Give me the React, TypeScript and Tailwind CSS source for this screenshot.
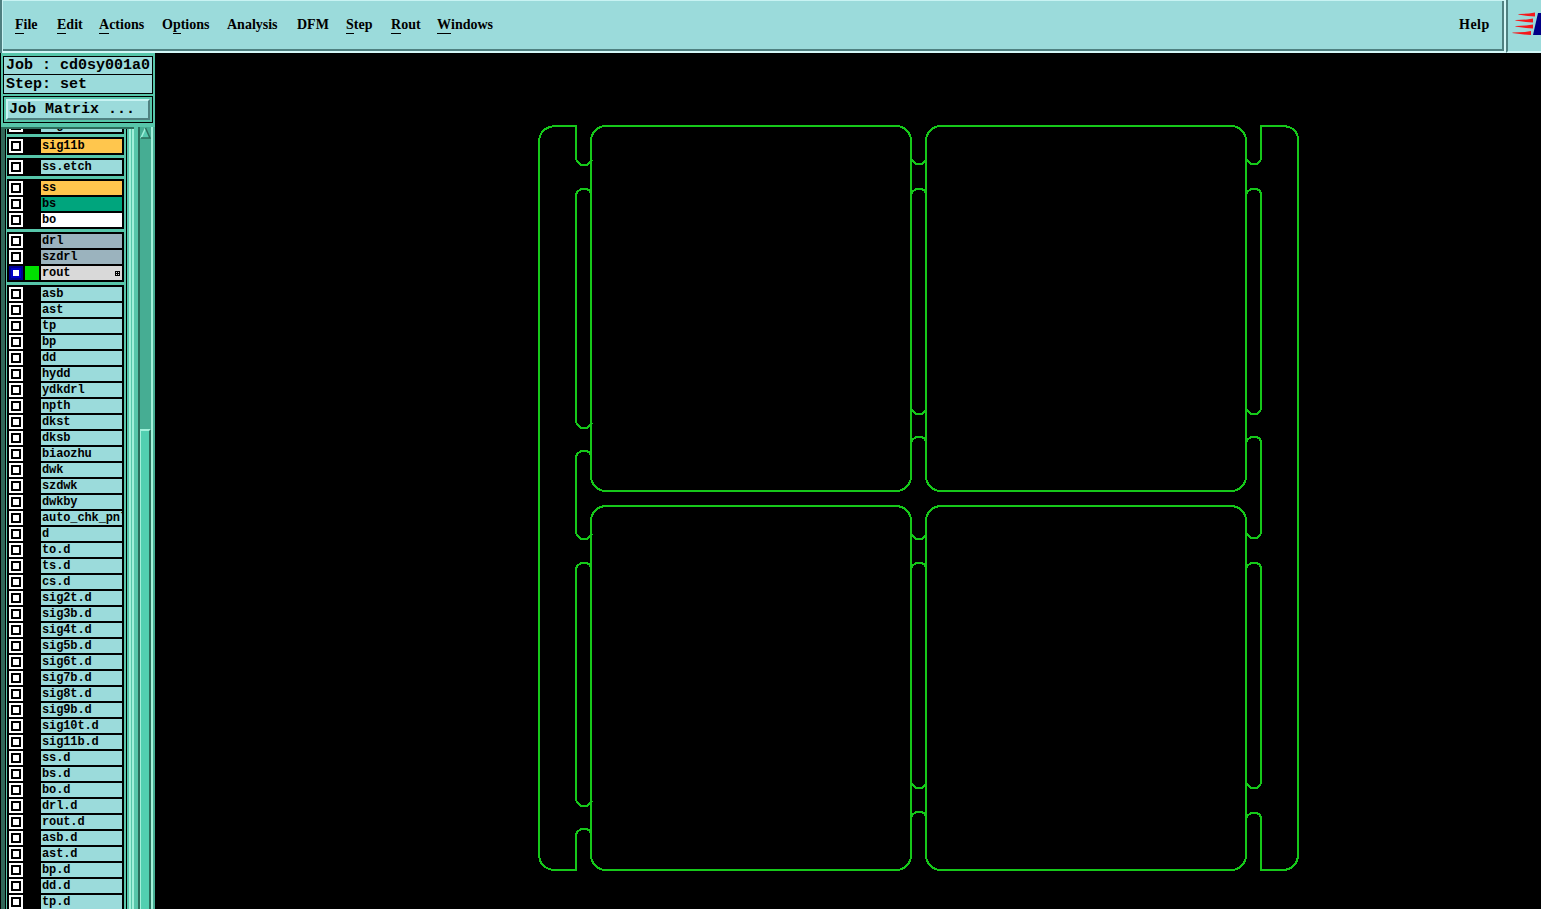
import clsx from "clsx";

type MenuItem = { label: string; hot?: number; width: string };
type Layer = { name: string; color?: string; active?: boolean };

const menuItems: MenuItem[] = [
  { label: "File", hot: 0, width: "w-[42px]" },
  { label: "Edit", hot: 0, width: "w-[42px]" },
  { label: "Actions", hot: 0, width: "w-[63px]" },
  { label: "Options", hot: 1, width: "w-[65px]" },
  { label: "Analysis", width: "w-[70px]" },
  { label: "DFM", width: "w-[49px]" },
  { label: "Step", hot: 0, width: "w-[45px]" },
  { label: "Rout", hot: 0, width: "w-[46px]" },
  { label: "Windows", hot: 0, width: "w-[60px]" },
];

const names = (list: string): Layer[] => list.split(" ").map((name) => ({ name }));

const layerGroups: Layer[][] = [
  [{ name: "sig10t" }],
  [{ name: "sig11b", color: "bg-[#ffc64d]" }],
  [{ name: "ss.etch" }],
  [
    { name: "ss", color: "bg-[#ffc64d]" },
    { name: "bs", color: "bg-[#00a57d]" },
    { name: "bo", color: "bg-white" },
  ],
  [
    { name: "drl", color: "bg-[#9bb3be]" },
    { name: "szdrl", color: "bg-[#9bb3be]" },
    { name: "rout", color: "bg-[#d9d9d9]", active: true },
  ],
  names(
    "asb ast tp bp dd hydd ydkdrl npth dkst dksb biaozhu dwk szdwk dwkby auto_chk_pnl d to.d ts.d cs.d sig2t.d sig3b.d sig4t.d sig5b.d sig6t.d sig7b.d sig8t.d sig9b.d sig10t.d sig11b.d ss.d bs.d bo.d drl.d rout.d asb.d ast.d bp.d dd.d tp.d"
  ),
];

const MenuLabel = ({ label, hot }: { label: string; hot?: number }) => {
  if (hot === undefined) return <>{label}</>;
  return (
    <>
      {label.slice(0, hot)}
      <span className="inline-block h-[17px] border-b border-black">{label[hot]}</span>
      {label.slice(hot + 1)}
    </>
  );
};

const MenuBar = () => (
  <header className="flex h-[53px] shrink-0 bg-[#9bdbdb] font-['Liberation_Serif',serif] text-[14px] leading-[16px] font-bold">
    <div className="w-[3px] border-r border-[#c8f3f3] bg-[#4f7f80]" />
    <div className="flex flex-1 border-t border-b-2 border-t-[#c8f3f3] border-b-[#d2f7f7]">
      <div className="flex flex-1 items-start border-r-2 border-b-2 border-[#4f8181] pt-[16px] pl-3">
        {menuItems.map((item) => (
          <div key={item.label} className={clsx("shrink-0 whitespace-nowrap", item.width)}>
            <MenuLabel label={item.label} hot={item.hot} />
          </div>
        ))}
        <div className="ml-auto w-[43px] tracking-[0.5px]">Help</div>
      </div>
    </div>
    <div className="w-[2px] bg-[#d2f7f7]" />
    <div className="w-[35px] overflow-hidden border-b-2 border-l-2 border-b-[#d2f7f7] border-l-[#4f8181]">
      <svg width="35" height="51" viewBox="1508 0 35 51">
        <g fill="#f5181b">
          <path d="M1519 14 1529 13.500 1535 12.500v4l-7-.5-10-1.500z" />
          <path d="M1516 20 1527 19.500 1533 18.500v4l-7-.5-11-1.500z" />
          <path d="M1516 26 1526 25.500 1533 24.500v4l-7-.5-11-1.500z" />
          <path d="M1513 32.500 1525 32 1531 31v4l-7-.5-12-1.500z" />
        </g>
        <path d="M1538 13h5v22h-10z" fill="#000085" />
      </svg>
    </div>
  </header>
);

const LayerRow = ({ name, color = "bg-[#9bdbdb]", active }: Layer) => (
  <div className="flex h-[14px]">
    <div className={clsx("flex w-[14px] items-center justify-center", active ? "bg-[#00008e]" : "bg-white")}>
      <div className={clsx("h-[10px] w-[10px] border-2 bg-white", active ? "border-[#0000c8]" : "border-black")} />
    </div>
    <div className={clsx("ml-[2px] w-[14px]", active ? "bg-[#00e000]" : "bg-black")} />
    <div className={clsx("ml-[2px] flex w-[81px] items-center overflow-hidden pl-[1px] whitespace-nowrap", color)}>
      <span className="leading-[14px]">{name}</span>
      {active && (
        <svg className="mr-[2px] ml-auto" width="5" height="5" viewBox="0 0 5 5" shapeRendering="crispEdges">
          <path d="M0 .5h5M0 2.500h5M0 4.500h5M.5 0v5M2.500 0v5M4.500 0v5" stroke="#000" fill="none" />
        </svg>
      )}
    </div>
  </div>
);

const ScrollBar = () => (
  <div className="flex w-[15px] flex-col border-x-2 border-r-[#a2f0da] border-l-[#2b6d5b] bg-[#46ad93]">
    <svg width="11" height="12" viewBox="0 0 11 12" className="shrink-0">
      <path d="M5.500 1 10 11H0z" fill="#56c9ae" />
      <path d="M5.500 1 1 11" stroke="#a2f0da" strokeWidth="1.500" />
      <path d="M5.500 1 10 11H1" stroke="#2b6d5b" strokeWidth="1.500" fill="none" />
    </svg>
    <div className="mt-[290px] flex-1 border-t-2 border-r-2 border-l border-t-[#a2f0da] border-r-[#2b6d5b] border-l-[#a2f0da] bg-[#52cfb0]" />
  </div>
);

const Sidebar = () => (
  <aside className="flex w-[155px] shrink-0 flex-col overflow-hidden border-l border-black bg-[#57c6aa] font-['Liberation_Mono',monospace] font-bold">
    <div className="mt-[3px] mr-[2px] ml-[2px] h-[38px] shrink-0 border border-black bg-[#9bdbdb] text-[15px] whitespace-nowrap">
      <div className="h-[18px] border-b border-black pl-[2px] leading-[17px]">Job : cd0sy001a0</div>
      <div className="pl-[2px] leading-[19px]">Step: set</div>
    </div>
    <div className="mt-[2px] mr-[2px] ml-[2px] h-[27px] shrink-0 border border-black p-[2px]">
      <div className="h-[21px] border-2 border-t-[#c8f3f3] border-r-[#4f8181] border-b-[#4f8181] border-l-[#c8f3f3] bg-[#9bdbdb] pl-[1px] text-[15px] leading-[18px]">
        Job Matrix ...
      </div>
    </div>
    <div className="mt-[4px] flex min-h-0 flex-1">
      <div className="flex w-[133px] border-t-2 border-[#2b6d5b]">
        <div className="w-[4px] bg-[#32685a]" />
        <div className="w-[1px] bg-black" />
        <div className="w-[121px] overflow-hidden border-r border-black pl-[1px] text-[12px] tracking-[-0.12px]">
          <div className="-mt-[13px] flex w-[117px] flex-col gap-[3px]">
            {layerGroups.map((group, i) => (
              <div key={i} className="flex flex-col gap-[2px] bg-black py-[2px] pl-[2px]">
                {group.map((layer) => (
                  <LayerRow key={layer.name} {...layer} />
                ))}
              </div>
            ))}
          </div>
        </div>
        <div className="ml-[2px] w-[2px] bg-[#a2f0da]" />
        <div className="ml-auto w-[2px] bg-[#a2f0da]" />
      </div>
      <div className="w-[4px] bg-[#57c6aa]" />
      <ScrollBar />
      <div className="w-[2px] bg-[#46ad93]" />
    </div>
  </aside>
);

const boards = [
  { x: 591, y: 126, h: 365 },
  { x: 926, y: 126, h: 365 },
  { x: 591, y: 506, h: 364 },
  { x: 926, y: 506, h: 364 },
];

// y positions where each routing slot closes (bottom) and reopens (top)
const slotColumns = [
  { x: 576, bottoms: [165, 428, 539, 806], tops: [189, 451, 563, 829] },
  { x: 911, bottoms: [164, 414, 539, 788], tops: [189, 437, 563, 812] },
  { x: 1246, bottoms: [164, 414, 538, 788], tops: [189, 437, 563, 813] },
];

const Canvas = () => (
  <main className="flex-1 bg-black">
    <svg
      width="1386"
      height="856"
      viewBox="155 53 1386 856"
      fill="none"
      stroke="#16c81a"
      strokeWidth="2"
      shapeRendering="crispEdges"
    >
      {boards.map((b) => (
        <rect key={`${b.x}-${b.y}`} x={b.x} y={b.y} width="320" height={b.h} rx="15" />
      ))}
      <path d="M576 159V126H556Q539 127 539 143V855Q540 868 553 870H576V834" />
      <path d="M1261 159V126H1283Q1297 127 1298 139V855Q1297 869 1283 870H1261V818" />
      <path d="M576 194V423M576 456V534M576 568V801" />
      <path d="M1261 194V409M1261 442V533M1261 568V783" />
      {slotColumns.map((col) =>
        col.bottoms.map((y) => (
          <path key={`b${col.x}-${y}`} d={`M${col.x} ${y - 6}l1 2 4 4h6l3-3 ${col.x === 576 ? "2-2" : "1-2"}`} />
        ))
      )}
      {slotColumns.map((col) =>
        col.tops.map((y) => (
          <path key={`t${col.x}-${y}`} d={`M${col.x} ${y + 6}l1-3 4-3 3-.5 3 .5 3 2 1 3`} />
        ))
      )}
    </svg>
  </main>
);

export default function App() {
  return (
    <div className="flex h-[909px] w-[1541px] flex-col overflow-hidden bg-black text-black">
      <MenuBar />
      <div className="flex min-h-0 flex-1">
        <Sidebar />
        <Canvas />
      </div>
    </div>
  );
}
